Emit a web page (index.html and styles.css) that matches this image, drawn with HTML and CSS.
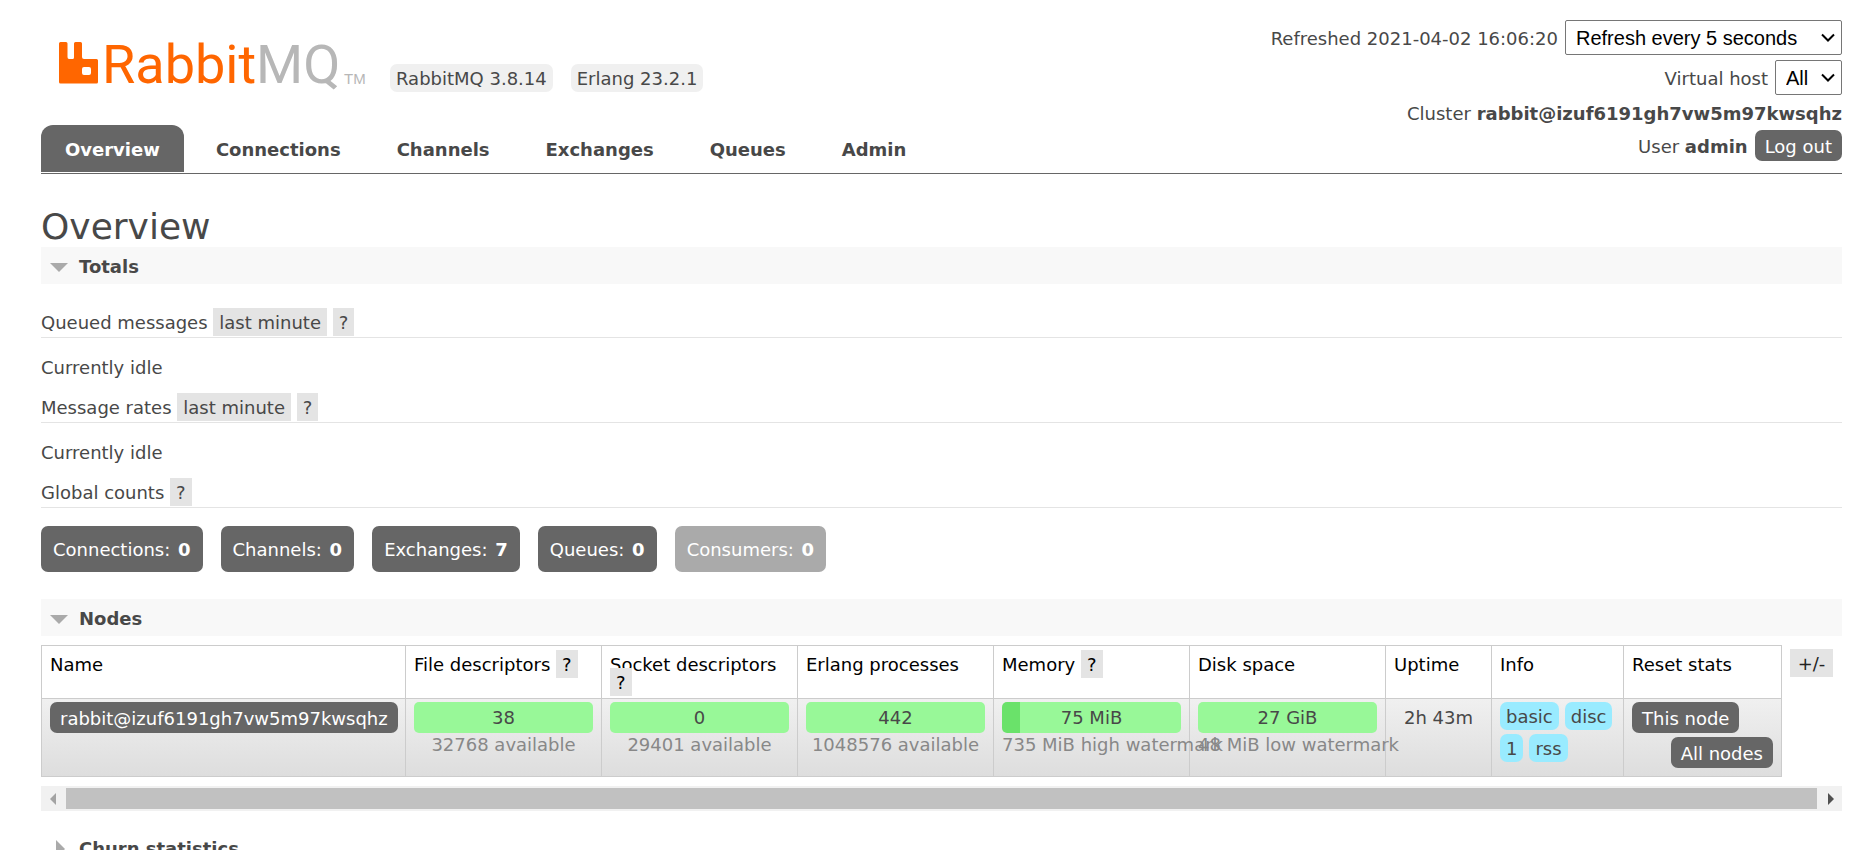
FILE: index.html
```html
<!DOCTYPE html>
<html lang="en">
<head>
<meta charset="utf-8">
<title>RabbitMQ Management</title>
<link rel="stylesheet" href="styles.css">
</head>
<body>
<header class="header">
  <div class="brand">
    <div class="logo-row">
      <svg class="logo" viewBox="0 0 313 44" role="img" aria-label="RabbitMQ">
        <path fill="#f60" fill-rule="evenodd" d="M1.500 1H7Q8.500 1 8.500 2.500V16Q8.500 18 10 18H13.500Q15 18 15 16.500V2.500Q15 1 16.500 1H21.500Q23 1 23 2.500V16Q23 18 25 18H37.500Q39 18 39 19.500V41Q39 42.500 37.500 42.500H1.500Q0 42.500 0 41V2.500Q0 1 1.500 1ZM25 26Q23 26 23 28V32Q23 34 25 34H30Q32 34 32 32V28Q32 26 30 26Z"/>
        <text class="logo-name" x="43" y="42">Rabbit<tspan class="logo-mq">MQ</tspan></text>
        <text class="logo-tm" x="285" y="43">TM</text>
      </svg>
      <span class="version">RabbitMQ 3.8.14</span>
      <span class="version">Erlang 23.2.1</span>
    </div>
    <nav class="tabs">
      <a class="tab selected" href="#overview">Overview</a>
      <a class="tab" href="#connections">Connections</a>
      <a class="tab" href="#channels">Channels</a>
      <a class="tab" href="#exchanges">Exchanges</a>
      <a class="tab" href="#queues">Queues</a>
      <a class="tab" href="#admin">Admin</a>
    </nav>
  </div>
  <div class="status">
    <div class="status-row">
      <label for="refresh">Refreshed 2021-04-02 16:06:20</label>
      <span class="picker"><select class="select refresh" id="refresh"><option>Refresh every 5 seconds</option></select><svg class="chevron" viewBox="0 0 14 9"><path d="M1 1.500L7 7.500L13 1.500"/></svg></span>
    </div>
    <div class="status-row">
      <label for="vhost">Virtual host</label>
      <span class="picker"><select class="select vhost" id="vhost"><option>All</option></select><svg class="chevron" viewBox="0 0 14 9"><path d="M1 1.500L7 7.500L13 1.500"/></svg></span>
    </div>
    <div class="status-row cluster"><span>Cluster <b>rabbit@izuf6191gh7vw5m97kwsqhz</b></span></div>
    <div class="status-row"><span>User <b>admin</b></span><button class="button">Log out</button></div>
  </div>
</header>

<main class="main" id="overview">
  <h1 class="title">Overview</h1>

  <section>
    <h2 class="section-head shaded"><button class="toggle"><svg class="arrow" viewBox="0 0 18 18"><path d="M0 5H18L9 14Z"/></svg>Totals</button></h2>
    <h3 class="metric first">Queued messages <button class="chip">last minute</button> <button class="chip">?</button></h3>
    <p class="idle">Currently idle</p>
    <h3 class="metric">Message rates <button class="chip">last minute</button> <button class="chip">?</button></h3>
    <p class="idle">Currently idle</p>
    <h3 class="metric">Global counts <button class="chip">?</button></h3>
    <div class="counts">
      <a class="count" href="#connections">Connections: <b>0</b></a>
      <a class="count" href="#channels">Channels: <b>0</b></a>
      <a class="count" href="#exchanges">Exchanges: <b>7</b></a>
      <a class="count" href="#queues">Queues: <b>0</b></a>
      <span class="count disabled">Consumers: <b>0</b></span>
    </div>
  </section>

  <section>
    <h2 class="section-head shaded"><button class="toggle"><svg class="arrow" viewBox="0 0 18 18"><path d="M0 5H18L9 14Z"/></svg>Nodes</button></h2>
    <div class="nodes">
      <table class="table">
        <colgroup><col><col class="col-bar" span="5"><col class="col-uptime"><col class="col-info"><col class="col-reset"></colgroup>
        <thead>
          <tr>
            <th>Name</th>
            <th>File descriptors <button class="chip">?</button></th>
            <th>Socket descriptors <button class="chip">?</button></th>
            <th>Erlang processes</th>
            <th>Memory <button class="chip">?</button></th>
            <th>Disk space</th>
            <th>Uptime</th>
            <th>Info</th>
            <th>Reset stats</th>
          </tr>
        </thead>
        <tbody>
          <tr>
            <td><a class="button" href="#node">rabbit@izuf6191gh7vw5m97kwsqhz</a></td>
            <td><div class="bar">38</div><div class="sub">32768 available</div></td>
            <td><div class="bar">0</div><div class="sub">29401 available</div></td>
            <td><div class="bar">442</div><div class="sub">1048576 available</div></td>
            <td><div class="bar used">75 MiB</div><div class="sub">735 MiB high watermark</div></td>
            <td><div class="bar">27 GiB</div><div class="sub">48 MiB low watermark</div></td>
            <td class="uptime">2h 43m</td>
            <td><div class="tags"><span class="tag">basic</span><span class="tag">disc</span><span class="tag">1</span><span class="tag">rss</span></div></td>
            <td><div class="resets"><button class="button">This node</button><button class="button last">All nodes</button></div></td>
          </tr>
        </tbody>
      </table>
      <button class="chip columns">+/-</button>
    </div>
    <div class="scrollbar">
      <svg class="scroll-arrow" viewBox="0 0 25 25"><path class="muted" d="M15 7V19L9 13Z"/></svg>
      <div class="thumb"></div>
      <svg class="scroll-arrow" viewBox="0 0 25 25"><path d="M11 7V19L17 13Z"/></svg>
    </div>
  </section>

  <section>
    <h2 class="section-head"><button class="toggle"><svg class="arrow" viewBox="0 0 18 18"><path d="M6 0V18L15 9Z"/></svg>Churn statistics</button></h2>
  </section>
</main>
</body>
</html>
```

FILE: styles.css
```css
* { box-sizing: border-box; }

html { overflow: hidden; }

body {
  margin: 0;
  padding: 0 30px 0 41px;
  background: #fff;
  color: #484848;
  font: 18px/21px Verdana, "DejaVu Sans", sans-serif;
}

button { font: inherit; color: inherit; border: 0; margin: 0; cursor: pointer; }
a { color: inherit; text-decoration: none; }

.header {
  display: flex;
  justify-content: space-between;
  border-bottom: 1px solid #666;
}

.logo-row {
  display: flex;
  align-items: flex-end;
  gap: 18px;
  padding: 41px 0 0 18px;
}
.logo { width: 313px; height: 44px; margin-bottom: 7px; overflow: visible; }
.logo-name { font: 54px Roboto, sans-serif; fill: #f60; }
.logo-mq, .logo-tm { fill: #b7b7b7; }
.logo-tm { font: 15px "Liberation Sans", sans-serif; }

.version {
  padding: 4px 6px 3px;
  border-radius: 7px;
  background: #f0f0f0;
}

.tabs { display: flex; gap: 8px; margin-top: 33px; padding-bottom: 1px; }
.tab {
  padding: 14px 24px 12px;
  border-radius: 12px 12px 0 0;
  font-weight: bold;
}
.tab.selected { background: #666; color: #fff; }

.status {
  display: flex;
  flex-direction: column;
  align-items: flex-end;
  gap: 5px;
  padding-top: 20px;
}
.status-row { display: flex; align-items: center; gap: 7px; }
.status-row > label, .status-row > span:not(.picker) { padding-top: 2px; }
.cluster { min-height: 25px; }

.picker { position: relative; }
.select {
  display: block;
  height: 35px;
  padding: 0 10px;
  border: 1px solid #767676;
  border-radius: 2px;
  background: #fff;
  color: #000;
  font: 20px "Liberation Sans", Arial, sans-serif;
  appearance: none;
}
.refresh { width: 277px; }
.vhost { width: 67px; }
.chevron {
  position: absolute;
  right: 7px;
  top: 13px;
  width: 14px;
  height: 9px;
  fill: none;
  stroke: #000;
  stroke-width: 2;
  pointer-events: none;
}

.button {
  display: inline-block;
  padding: 6px 10px 4px;
  border-radius: 7px;
  background: #666;
  color: #fff;
  white-space: nowrap;
}

.title {
  margin: 32px 0 0;
  font-size: 36px;
  line-height: 41px;
  font-weight: normal;
}

.section-head { margin: 0; font-size: 18px; }
.shaded { background: #f8f8f8; }
.toggle {
  display: flex;
  align-items: center;
  gap: 11px;
  padding: 9px 9px 7px;
  background: none;
}
.arrow { width: 18px; height: 18px; fill: #aaa; }

.metric {
  margin: 19px 0 0;
  padding-bottom: 3px;
  border-bottom: 1px solid #e4e4e4;
  font-size: 18px;
  font-weight: normal;
  line-height: 22px;
}
.first { margin-top: 28px; }
.idle { margin: 19px 0 0; }

.chip {
  margin: -6px 0;
  padding: 4px 6px 3px;
  background: #e4e4e4;
  line-height: 21px;
}

.counts { display: flex; gap: 18px; margin: 18px 0 27px; }
.count {
  padding: 13px 12px 12px;
  border-radius: 7px;
  background: #666;
  color: #fff;
}
.count b { margin-left: 2px; }
.disabled { background: #aaa; }

.nodes {
  display: flex;
  align-items: flex-start;
  gap: 8px;
  margin-top: 9px;
  padding-right: 9px;
}
.table {
  flex: 1;
  table-layout: fixed;
  width: 100%;
  border-collapse: collapse;
}
.col-bar { width: 196px; }
.col-uptime { width: 106px; }
.col-info { width: 132px; }
.col-reset { width: 158px; }

.table th, .table td {
  border: 1px solid #ccc;
  padding: 3px 8px;
  text-align: left;
  vertical-align: top;
}
.table th {
  height: 53px;
  padding-top: 10px;
  color: #000;
  font-weight: normal;
  line-height: 18px;
}
.table tbody tr { height: 78px; background: linear-gradient(#f0f0f0, #ddd); }

.bar {
  padding: 5px 0;
  border-radius: 5px;
  background: #98f898;
  text-align: center;
}
.used { background: linear-gradient(90deg, #6ae26a 10%, #98f898 10%); }
.sub {
  padding-top: 1px;
  color: #888;
  text-align: center;
  white-space: nowrap;
}
.table .uptime { padding-top: 8px; text-align: center; }

.tags { display: flex; flex-wrap: wrap; gap: 4px 6px; }
.tag {
  padding: 4px 6px 3px;
  border-radius: 7px;
  background: #99ebff;
}
.resets { display: flex; flex-direction: column; align-items: flex-start; gap: 4px; }
.last { align-self: flex-end; }
.columns { min-width: 43px; margin: 4px 0 0; color: #222; }

.scrollbar {
  display: flex;
  align-items: center;
  margin: 9px 0 18px;
  background: #f1f1f1;
}
.thumb { flex: 1; height: 21px; background: #c1c1c1; }
.scroll-arrow { width: 25px; height: 25px; fill: #505050; }
.muted { fill: #a3a3a3; }
```
